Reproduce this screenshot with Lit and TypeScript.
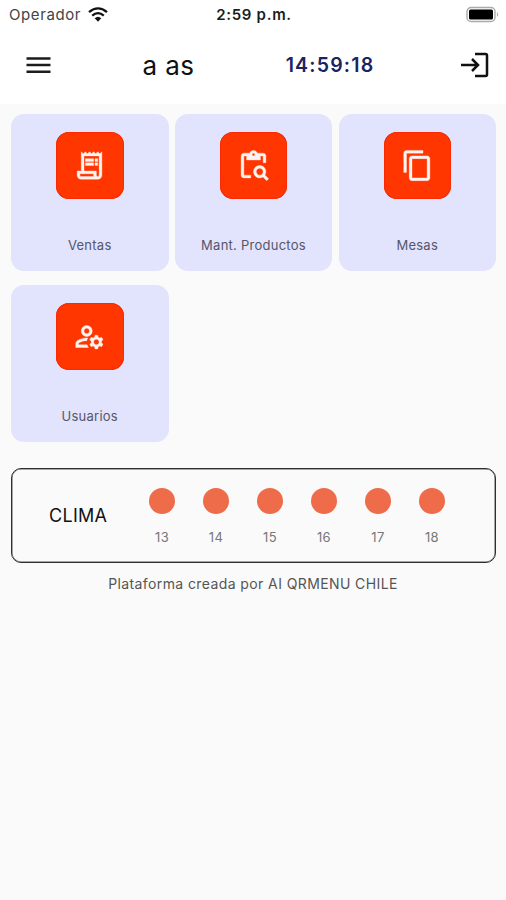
import { LitElement, html, css, svg } from "lit";
import { customElement, property } from "lit/decorators.js";

const icons = {
  receipt: "M19.5 3.5L18 2l-1.5 1.5L15 2l-1.5 1.5L12 2l-1.5 1.5L9 2 7.5 3.5 6 2v14H3v3c0 1.66 1.34 3 3 3h12c1.66 0 3-1.34 3-3V2l-1.5 1.5zM15 20H6c-.55 0-1-.45-1-1v-1h10v2zm4-1c0 .55-.45 1-1 1s-1-.45-1-1v-3H8V5h11v14zM9 7h6v2H9zM16 7h2v2h-2zM9 10h6v2H9zM16 10h2v2h-2z",
  search: "M5 5h2v3h10V5h2v5h2V5c0-1.1-.9-2-2-2h-4.18C14.4 1.84 13.3 1 12 1S9.6 1.84 9.18 3H5c-1.1 0-2 .9-2 2v14c0 1.1.9 2 2 2h5v-2H5V5zm7-2c.55 0 1 .45 1 1s-.45 1-1 1-1-.45-1-1 .45-1 1-1zM20.3 18.9c.4-.7.7-1.5.7-2.4 0-2.5-2-4.5-4.5-4.5S12 14 12 16.5s2 4.5 4.5 4.5c.9 0 1.7-.3 2.4-.7l2.7 2.7 1.4-1.4-2.7-2.7zM16.5 19c-1.4 0-2.5-1.1-2.5-2.5s1.1-2.5 2.5-2.5 2.5 1.1 2.5 2.5-1.1 2.5-2.5 2.5z",
  copy: "M16 1H4c-1.1 0-2 .9-2 2v14h2V3h12V1zm3 4H8c-1.1 0-2 .9-2 2v14c0 1.1.9 2 2 2h11c1.1 0 2-.9 2-2V7c0-1.1-.9-2-2-2zm0 16H8V7h11v14z",
  manage: "M4 18v-.65c0-.34.16-.66.41-.81C6.1 15.53 8.03 15 10 15c.03 0 .05 0 .08.01.1-.7.3-1.37.59-1.98-.22-.02-.44-.03-.67-.03-2.42 0-4.68.67-6.61 1.82-.88.52-1.39 1.5-1.39 2.53V20h9.26c-.42-.6-.75-1.28-.97-2H4zM10 12c2.21 0 4-1.79 4-4s-1.79-4-4-4-4 1.79-4 4 1.79 4 4 4zm0-6c1.1 0 2 .9 2 2s-.9 2-2 2-2-.9-2-2 .9-2 2-2zM20.75 16c0-.22-.03-.42-.06-.63l1.14-1.01-1-1.73-1.45.49c-.32-.27-.68-.48-1.08-.63L18 11h-2l-.3 1.49c-.4.15-.76.36-1.08.63l-1.45-.49-1 1.73 1.14 1.01c-.03.21-.06.41-.06.63s.03.42.06.63l-1.14 1.01 1 1.73 1.45-.49c.32.27.68.48 1.08.63L16 21h2l.3-1.49c.4-.15.76-.36 1.08-.63l1.45.49 1-1.73-1.14-1.01c.03-.21.06-.41.06-.63zM17 18c-1.1 0-2-.9-2-2s.9-2 2-2 2 .9 2 2-.9 2-2 2z",
};

@customElement("menu-card")
class MenuCard extends LitElement {
  @property() label = "";
  @property() icon: keyof typeof icons = "receipt";
  static styles = css`
    :host { display: flex; flex-direction: column; align-items: center; box-sizing: border-box; height: 157px; padding-top: 18px; border-radius: 13px; background: #e2e3fd; }
    .tile { width: 67.5px; height: 67px; border-radius: 13px; background: #ff3600; display: grid; place-items: center; box-shadow: inset 0 0 0 1px #fb2a04; }
    .glyph { width: 33px; height: 33px; fill: #fff4f1; stroke: #fff4f1; stroke-width: .25; display: block; }
    .label { margin-top: 36px; font-size: 13px; line-height: 20px; letter-spacing: .25px; color: #56566a; white-space: nowrap; }
  `;
  render() {
    return html`<div class="tile"><svg class="glyph" viewBox="0 0 24 24" overflow="visible">${svg`<path fill-rule="evenodd" d=${icons[this.icon]} />`}</svg></div>
      <div class="label">${this.label}</div>`;
  }
}

@customElement("app-root")
class AppRoot extends LitElement {
  static styles = css`
    :host { display: block; height: 900px; background: #fafafa; font-family: Inter, "Liberation Sans", sans-serif; color: #111; overflow: hidden; }
    .top { height: 104px; background: #fff; }
    .status { height: 28px; display: grid; grid-template-columns: 1fr auto 1fr; align-items: center; padding: 0 7px 0 9px; box-sizing: border-box; }
    .carrier { display: flex; align-items: center; gap: 7px; font-size: 15px; letter-spacing: .6px; color: #444; }
    .wifi { width: 20px; height: 15px; display: block; }
    .time { font-size: 15px; font-weight: 600; letter-spacing: .7px; color: #1c1c1c; }
    .battery { justify-self: end; width: 33px; height: 17px; display: block; }
    .bar { height: 74px; display: grid; grid-template-columns: 118px 101px 222px 1fr; align-items: center; }
    .menu { width: 25px; height: 18px; margin-left: 26px; display: block; }
    .title { justify-self: center; font-size: 26px; letter-spacing: .4px; }
    .clock { justify-self: center; font-size: 19.5px; font-weight: 600; letter-spacing: 1.2px; color: #1d2260; }
    .exit { width: 28px; height: 26px; margin-left: 20px; display: block; }
    .grid { display: grid; grid-template-columns: repeat(3, 157.5px); justify-content: space-between; row-gap: 14px; padding: 10px 10px 0 11px; }
    .weather { margin: 26px 10px 0 11px; height: 95px; box-sizing: border-box; border: 1px solid #2e2e2e; box-shadow: inset 0 0 0 .5px #555; border-radius: 10px; display: flex; align-items: center; padding-left: 37px; }
    .heading { width: 86px; font-size: 18px; letter-spacing: .3px; }
    .hours { display: flex; padding-top: 3px; }
    .hour { width: 54px; display: flex; flex-direction: column; align-items: center; gap: 13px; font-size: 13px; line-height: 20px; letter-spacing: .4px; color: #777; }
    .dot { width: 26px; height: 26px; border-radius: 50%; background: #ee6c49; }
    .footer { margin-top: 11px; text-align: center; font-size: 14px; line-height: 20px; letter-spacing: .4px; color: #555; }
  `;
  render() {
    return html`
      <header class="top">
        <div class="status">
          <div class="carrier"><span>Operador</span>
            <svg class="wifi" viewBox="0 0 20 15" fill="none" stroke="#111" stroke-width="2.3"><path d="M1 5.2Q10-2.4 19 5.2M4.200 8.600Q10 3.600 15.800 8.600" /><path d="M6.700 11.200Q10 8.200 13.300 11.200L10 14.700Z" fill="#111" stroke="none" /></svg>
          </div>
          <div class="time">2:59 p.m.</div>
          <svg class="battery" viewBox="0 0 33 17"><rect x="1" y="1.5" width="28" height="14" rx="4" fill="#fff" stroke="#aaa" stroke-width="1.4" /><rect x="3" y="3.5" width="24" height="10" rx="1.5" fill="#000" /><path d="M31 6v5q2-2.5 0-5" fill="#999" /></svg>
        </div>
        <div class="bar">
          <svg class="menu" viewBox="0 0 25 18" stroke="#1c1c1c" stroke-width="2.4"><path d="M.5 2.500h24M.5 9h24M.5 15.700h24" /></svg>
          <div class="title">a as</div>
          <div class="clock">14:59:18</div>
          <svg class="exit" viewBox="0 0 28 26" fill="none" stroke="#111" stroke-width="2.5"><path d="M14 2h10.500q1.500 0 1.500 1.500v19q0 1.500-1.500 1.500H14M0 13h17M11 7l6 6-6 6" /></svg>
        </div>
      </header>
      <main>
        <section class="grid">
          <menu-card label="Ventas" icon="receipt"></menu-card>
          <menu-card label="Mant. Productos" icon="search"></menu-card>
          <menu-card label="Mesas" icon="copy"></menu-card>
          <menu-card label="Usuarios" icon="manage"></menu-card>
        </section>
        <section class="weather">
          <div class="heading">CLIMA</div>
          <div class="hours">${[13, 14, 15, 16, 17, 18].map((h) => html`<div class="hour"><div class="dot"></div><span>${h}</span></div>`)}</div>
        </section>
        <div class="footer">Plataforma creada por AI QRMENU CHILE</div>
      </main>`;
  }
}
